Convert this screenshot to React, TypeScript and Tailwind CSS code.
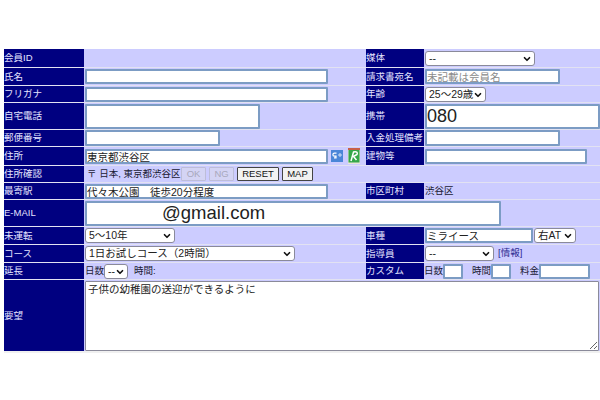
import React from 'react';
import { ChevronDown } from 'lucide-react';

const Label = ({ children }: { children: React.ReactNode }) => (
  <div className="flex items-center bg-[#000080] text-[9.5px] leading-none text-[#e4e4ff] whitespace-nowrap overflow-hidden">{children}</div>
);

const Cell = ({ children, className = '' }: { children?: React.ReactNode; className?: string }) => (
  <div className={`flex items-center bg-[#ccccff] text-[9.5px] text-[#1a1a33] whitespace-nowrap min-w-0 ${className}`}>{children}</div>
);

const inputCls = 'block bg-white border-2 border-[#7c9cc4] rounded-[1px] px-0 text-[#222] outline-none text-[10.5px] leading-none';

const Text = ({ w, h, value = '', placeholder, className = '' }: { w: string; h: string; value?: string; placeholder?: string; className?: string }) => (
  <input readOnly value={value} placeholder={placeholder} className={`${inputCls} ${w} ${h} ${className}`} />
);

// native arrow is too wide at this size, so the chevron is drawn over the select
const Select = ({ w, option, className = '' }: { w: string; option: string; className?: string }) => (
  <div className={`relative shrink-0 ${w} h-[15px] ${className}`}>
    <select className="block w-full h-full appearance-none bg-white border border-[#8a8a9a] rounded-[3px] pl-[3px] text-[10.5px] leading-none text-[#222] outline-none">
      <option>{option}</option>
    </select>
    <ChevronDown size={10} strokeWidth={4} className="absolute right-[3px] top-[3px] text-[#111] pointer-events-none" />
  </div>
);

const btnCls = 'h-[14px] flex items-center justify-center border rounded-[1px] text-[9.5px] leading-none';

export default function App() {
  return (
    <div className="w-[600px] h-[400px] bg-white overflow-hidden pt-[49px] pl-[4px] font-['Liberation_Sans','Noto_Sans_CJK_JP',sans-serif]">
      <div className="grid grid-cols-[80px_282px_58px_176px] grid-rows-[18px_17px_16px_26px_16px_18px_16px_16px_26px_17px_17px_16px_71px] gap-y-px bg-[#e2e2f2] border-b-2 border-[#f0f0f0]">
        {/* 会員ID */}
        <Label>会員ID</Label>
        <Cell />
        <Label>媒体</Label>
        <Cell className="pl-px"><Select w="w-[110px]" option="--" /></Cell>

        <Label>氏名</Label>
        <Cell className="pl-px"><Text w="w-[243px]" h="h-[15px]" /></Cell>
        <Label>請求書宛名</Label>
        <Cell className="pl-px"><Text w="w-[135px]" h="h-[15px]" placeholder="未記載は会員名" className="placeholder:text-[#8a8a8a]" /></Cell>

        <Label>フリガナ</Label>
        <Cell className="pl-px"><Text w="w-[243px]" h="h-[15px]" /></Cell>
        <Label>年齢</Label>
        <Cell className="pl-px"><Select w="w-[61px]" option="25～29歳" /></Cell>

        <Label>自宅電話</Label>
        <Cell className="pl-px"><Text w="w-[175px]" h="h-[25px]" /></Cell>
        <Label>携帯</Label>
        <Cell className="pl-px"><Text w="w-[175px]" h="h-[25px]" value="080" className="text-[18px]" /></Cell>

        <Label>郵便番号</Label>
        <Cell className="pl-px"><Text w="w-[135px]" h="h-[16px]" /></Cell>
        <Label>入金処理備考</Label>
        <Cell className="pl-px"><Text w="w-[135px]" h="h-[16px]" /></Cell>

        <Label>住所</Label>
        <Cell className="pl-px">
          <Text w="w-[243px]" h="h-[15px]" value="東京都渋谷区" />
          <svg viewBox="0 0 12 12" className="w-[12px] h-[12px] ml-[3px] shrink-0">
            <rect width="12" height="12" fill="#4a86d8" />
            <path d="M5.5 3.2H3.4a1.5 1.5 0 0 0 0 3h1.6v1.6H3" fill="none" stroke="#fff" strokeWidth="1.2" />
            <path d="M9 3v4M7 5h4" stroke="#cfe0f8" strokeWidth="1" />
          </svg>
          <svg viewBox="0 0 12 16" className="w-[12px] h-[16px] ml-[5px] shrink-0">
            <rect width="12" height="16" fill="#e8e4da" />
            <rect y="0" width="12" height="2" fill="#c8604a" />
            <rect x="0.5" y="2" width="11" height="12.5" fill="#35a84a" />
            <path d="M3 13L5.5 4c3-1 4.5.5 3.5 2.5L5.5 8.5l3 3.5" fill="none" stroke="#fff" strokeWidth="1.5" />
          </svg>
        </Cell>
        <Label>建物等</Label>
        <Cell className="pl-px"><Text w="w-[162px]" h="h-[15px]" /></Cell>

        <Label>住所確認</Label>
        <Cell className="col-span-3 pl-[3px] gap-[3px]">
          <span className="w-[91px]">〒 日本, 東京都渋谷区</span>
          <span className={`${btnCls} w-[25px] border-[#bdbdd8] text-[#a8a8bc] bg-[#d4d4f4]`}>OK</span>
          <span className={`${btnCls} w-[25px] border-[#bdbdd8] text-[#a8a8bc] bg-[#d4d4f4]`}>NG</span>
          <span className={`${btnCls} w-[42px] border-[#444] text-[#111] bg-[#f2f2f2]`}>RESET</span>
          <span className={`${btnCls} w-[31px] border-[#444] text-[#111] bg-[#f2f2f2]`}>MAP</span>
        </Cell>

        <Label>最寄駅</Label>
        <Cell className="pl-px"><Text w="w-[243px]" h="h-[15px]" value="代々木公園　徒歩20分程度" /></Cell>
        <Label>市区町村</Label>
        <Cell className="pl-px">渋谷区</Cell>

        <Label>E-MAIL</Label>
        <Cell className="col-span-3 pl-px">
          <Text w="w-[416px]" h="h-[25px]" value="@gmail.com" className="text-[18.5px] pl-[75px]" />
        </Cell>

        <Label>未運転</Label>
        <Cell className="pl-px"><Select w="w-[90px]" option="5～10年" /></Cell>
        <Label>車種</Label>
        <Cell className="pl-px">
          <Text w="w-[108px]" h="h-[15px]" value="ミライース" />
          <Select w="w-[42px]" option="右AT" className="ml-px" />
        </Cell>

        <Label>コース</Label>
        <Cell className="pl-px"><Select w="w-[210px]" option="1日お試しコース（2時間）" /></Cell>
        <Label>指導員</Label>
        <Cell className="pl-px gap-[4px]">
          <Select w="w-[69px]" option="--" />
          <span className="text-[#2a2a90]">[情報]</span>
        </Cell>

        <Label>延長</Label>
        <Cell className="pl-px">
          日数
          <Select w="w-[24px]" option="--" />
          <span className="ml-[6px]">時間:</span>
        </Cell>
        <Label>カスタム</Label>
        <Cell>
          日数
          <input readOnly className={`${inputCls} w-[20px] h-[15px]`} />
          <span className="ml-[9px]">時間</span>
          <input readOnly className={`${inputCls} w-[20px] h-[15px]`} />
          <span className="ml-[9px]">料金</span>
          <input readOnly className={`${inputCls} w-[51px] h-[15px]`} />
        </Cell>

        <Label>要望</Label>
        <Cell className="col-span-3 pl-px pr-px">
          <textarea readOnly value="子供の幼稚園の送迎ができるように" className="block w-full h-[70px] bg-white border border-[#8a8a9a] rounded-[1px] px-[2px] text-[10.5px] leading-[14px] text-[#222] outline-none" />
        </Cell>
      </div>
    </div>
  );
}
